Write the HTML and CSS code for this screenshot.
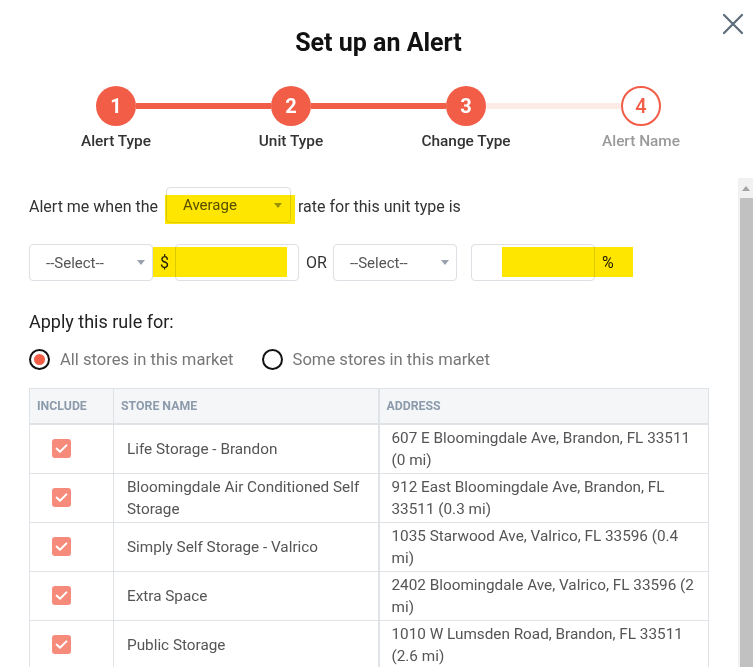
FILE: index.html
```html
<!DOCTYPE html>
<html lang="en">
<head>
<meta charset="utf-8">
<title>Set up an Alert</title>
<link rel="stylesheet" href="styles.css">
</head>
<body>
<div class="modal">
  <button class="close" aria-label="Close">
    <svg width="22" height="22" viewBox="0 0 22 22"><path d="M2 2 L20 20 M20 2 L2 20" stroke="#5b6b7a" stroke-width="2.2" stroke-linecap="round" fill="none"/></svg>
  </button>
  <h1 class="title">Set up an Alert</h1>

  <div class="stepper">
    <span class="dot">1</span>
    <span class="line"></span>
    <span class="dot">2</span>
    <span class="line"></span>
    <span class="dot">3</span>
    <span class="line todo"></span>
    <span class="dot todo">4</span>
    <span class="label s1">Alert Type</span>
    <span class="label s2">Unit Type</span>
    <span class="label s3">Change Type</span>
    <span class="label s4 todo">Alert Name</span>
  </div>

  <div class="main">
    <div class="content">
      <div class="row-alert">
        <span class="txt">Alert me when the</span>
        <span class="hl-wrap">
          <span class="select sel-avg"><span>Average</span><i class="caret"></i></span>
          <span class="hl hl-avg"></span>
        </span>
        <span class="txt">rate for this unit type is</span>
      </div>

      <div class="row-amount">
        <span class="select"><span>--Select--</span><i class="caret"></i></span>
        <span class="sym dollar">$</span>
        <span class="input"></span>
        <span class="or">OR</span>
        <span class="select"><span>--Select--</span><i class="caret"></i></span>
        <span class="input input-pct"></span>
        <span class="sym pct">%</span>
        <span class="hl hl-1"></span>
        <span class="hl hl-2"></span>
      </div>

      <h2 class="apply">Apply this rule for:</h2>

      <div class="radios">
        <label class="radio on"><i></i>All stores in this market</label>
        <label class="radio"><i></i>Some stores in this market</label>
      </div>

      <table class="stores">
        <colgroup>
          <col class="c-inc"><col class="c-name"><col class="c-addr">
        </colgroup>
        <thead>
          <tr><th>Include</th><th>Store Name</th><th class="addr">Address</th></tr>
        </thead>
        <tbody>
          <tr>
            <td class="inc"><svg class="check" width="19" height="19" viewBox="0 0 19 19"><rect width="19" height="19" rx="3" fill="#f68b7c"/><path d="M4.6 9.6 L8 12.8 L14.4 6.4" stroke="#fff" stroke-width="2" fill="none" stroke-linecap="round" stroke-linejoin="round"/></svg></td>
            <td class="name">Life Storage - Brandon</td>
            <td class="addr">607 E Bloomingdale Ave, Brandon, FL 33511 (0 mi)</td>
          </tr>
          <tr>
            <td class="inc"><svg class="check" width="19" height="19" viewBox="0 0 19 19"><rect width="19" height="19" rx="3" fill="#f68b7c"/><path d="M4.6 9.6 L8 12.8 L14.4 6.4" stroke="#fff" stroke-width="2" fill="none" stroke-linecap="round" stroke-linejoin="round"/></svg></td>
            <td class="name">Bloomingdale Air Conditioned Self Storage</td>
            <td class="addr">912 East Bloomingdale Ave, Brandon, FL 33511 (0.3 mi)</td>
          </tr>
          <tr>
            <td class="inc"><svg class="check" width="19" height="19" viewBox="0 0 19 19"><rect width="19" height="19" rx="3" fill="#f68b7c"/><path d="M4.6 9.6 L8 12.8 L14.4 6.4" stroke="#fff" stroke-width="2" fill="none" stroke-linecap="round" stroke-linejoin="round"/></svg></td>
            <td class="name">Simply Self Storage - Valrico</td>
            <td class="addr">1035 Starwood Ave, Valrico, FL 33596 (0.4 mi)</td>
          </tr>
          <tr>
            <td class="inc"><svg class="check" width="19" height="19" viewBox="0 0 19 19"><rect width="19" height="19" rx="3" fill="#f68b7c"/><path d="M4.6 9.6 L8 12.8 L14.4 6.4" stroke="#fff" stroke-width="2" fill="none" stroke-linecap="round" stroke-linejoin="round"/></svg></td>
            <td class="name">Extra Space</td>
            <td class="addr">2402 Bloomingdale Ave, Valrico, FL 33596 (2 mi)</td>
          </tr>
          <tr>
            <td class="inc"><svg class="check" width="19" height="19" viewBox="0 0 19 19"><rect width="19" height="19" rx="3" fill="#f68b7c"/><path d="M4.6 9.6 L8 12.8 L14.4 6.4" stroke="#fff" stroke-width="2" fill="none" stroke-linecap="round" stroke-linejoin="round"/></svg></td>
            <td class="name">Public Storage</td>
            <td class="addr">1010 W Lumsden Road, Brandon, FL 33511 (2.6 mi)</td>
          </tr>
        </tbody>
      </table>
    </div>
    <div class="scrollbar">
      <span class="sb-up"></span>
      <span class="sb-thumb"></span>
    </div>
  </div>
</div>
</body>
</html>
```

FILE: styles.css
```css
* { box-sizing: border-box; }
html, body { margin: 0; padding: 0; background: #fff; }
body {
  font-family: Roboto, "Noto Sans", "Liberation Sans", sans-serif;
  color: #333;
  width: 753px;
  height: 667px;
  overflow: hidden;
}
.modal {
  position: relative;
  height: 667px;
  display: flex;
  flex-direction: column;
}
.close {
  position: absolute;
  top: 13px;
  right: 9px;
  width: 22px;
  height: 22px;
  padding: 0;
  border: 0;
  background: none;
}
.close svg { display: block; }

.title {
  margin: 0;
  padding: 29px 0 0 4px;
  text-align: center;
  font-size: 25px;
  line-height: 28px;
  font-weight: 700;
  color: #111;
}

.stepper {
  display: grid;
  grid-template-columns: 40px 135px 40px 135px 40px 135px 40px;
  grid-template-rows: 40px auto;
  row-gap: 6px;
  margin: 29px 0 0 96px;
}
.dot {
  width: 40px;
  height: 40px;
  border-radius: 50%;
  background: #f25d48;
  color: #fff;
  display: flex;
  align-items: center;
  justify-content: center;
  font-size: 20px;
  font-weight: 700;
}
.dot.todo {
  background: #fff;
  border: 2px solid #f25d48;
  color: #f25d48;
  font-weight: 500;
}
.line {
  height: 6px;
  align-self: center;
  background: #f25d48;
}
.line.todo { background: #fdebe7; }
.label {
  grid-row: 2;
  justify-self: center;
  white-space: nowrap;
  font-size: 15.4px;
  line-height: 18px;
  font-weight: 500;
  color: #333;
}
.label.s1 { grid-column: 1; }
.label.s2 { grid-column: 3; }
.label.s3 { grid-column: 5; }
.label.s4 { grid-column: 7; }
.label.todo { color: #9a9a9a; }

.main {
  flex: 1;
  min-height: 0;
  display: flex;
  margin-top: 28px;
}
.content {
  flex: 1;
  overflow: hidden;
  padding: 9px 0 0 29px;
}
.scrollbar {
  width: 15px;
  background: #f1f1f1;
  display: flex;
  flex-direction: column;
  align-items: flex-end;
}
.sb-up {
  width: 15px;
  height: 20px;
  display: flex;
  align-items: center;
  justify-content: center;
}
.sb-up::before {
  content: "";
  border-left: 4.5px solid transparent;
  border-right: 4.5px solid transparent;
  border-bottom: 5px solid #a3a3a3;
}
.sb-thumb {
  width: 13px;
  flex: 1;
  background: #c1c1c1;
}

.txt { font-size: 16px; color: #333; padding-top: 2px; }
.row-alert {
  display: flex;
  align-items: center;
  height: 36px;
}
.hl-wrap {
  position: relative;
  margin: 0 7px 0 8px;
}
.select {
  display: flex;
  align-items: center;
  justify-content: space-between;
  width: 124px;
  height: 37px;
  padding: 0 7px 0 16px;
  background: #fff;
  border: 1px solid #dcdfe3;
  border-radius: 4px;
  font-size: 15px;
  color: #555;
}
.sel-avg {
  width: 125px;
  height: 36px;
  padding-right: 8px;
}
.caret {
  width: 0;
  height: 0;
  border-left: 4.5px solid transparent;
  border-right: 4.5px solid transparent;
  border-top: 5px solid #9aa3ad;
}
.hl {
  position: absolute;
  background: #ffe600;
  mix-blend-mode: multiply;
}
.hl-avg { left: -1px; top: 8px; width: 130px; height: 29px; }

.row-amount {
  position: relative;
  display: flex;
  align-items: center;
  margin-top: 21px;
  height: 37px;
}
.sym { font-size: 16px; color: #222; }
.dollar { margin: 0 6px 0 7px; }
.input {
  width: 124px;
  height: 37px;
  border: 1px solid #dcdfe3;
  border-radius: 4px;
  background: #fff;
}
.or { font-size: 16px; color: #333; margin: 0 6px 0 7px; }
.input-pct { margin-left: 14px; }
.pct { margin-left: 7px; }
.hl-1 { left: 124px; top: 3px; width: 134px; height: 30px; }
.hl-2 { left: 473px; top: 3px; width: 131px; height: 30px; }

.apply {
  margin: 31px 0 0;
  font-size: 18px;
  line-height: 20px;
  font-weight: 400;
  color: #222;
}
.radios {
  display: flex;
  align-items: center;
  gap: 28px;
  margin-top: 17px;
}
.radio {
  display: inline-flex;
  align-items: center;
  gap: 10px;
  font-size: 16.6px;
  color: #777;
}
.radio i {
  width: 21px;
  height: 21px;
  border: 2px solid #111;
  border-radius: 50%;
  display: flex;
  align-items: center;
  justify-content: center;
}
.radio.on i::after {
  content: "";
  width: 11px;
  height: 11px;
  border-radius: 50%;
  background: #f25d48;
}

.stores {
  margin-top: 18px;
  width: 679px;
  border-collapse: collapse;
  table-layout: fixed;
  font-size: 15.3px;
  color: #555;
}
.c-inc { width: 84px; }
.c-name { width: 265px; }
.c-addr { width: 330px; }
.stores th {
  height: 35px;
  padding: 0 7px;
  text-align: left;
  background: #f5f6f8;
  border: 1px solid #dfe2e6;
  border-bottom: 2px solid #dfe2e6;
  font-size: 12.3px;
  font-weight: 700;
  text-transform: uppercase;
  color: #8c9bab;
}
.stores th.addr { border-left-width: 2px; }
.stores td {
  border: 1px solid #dfe2e6;
  vertical-align: middle;
  line-height: 22px;
}
.stores td.inc { padding: 0 0 0 22px; }
.stores td.name { padding: 2px 13px; }
.stores td.addr { padding: 2px 6px 2px 12px; border-left-width: 2px; }
.check { display: block; }
```
